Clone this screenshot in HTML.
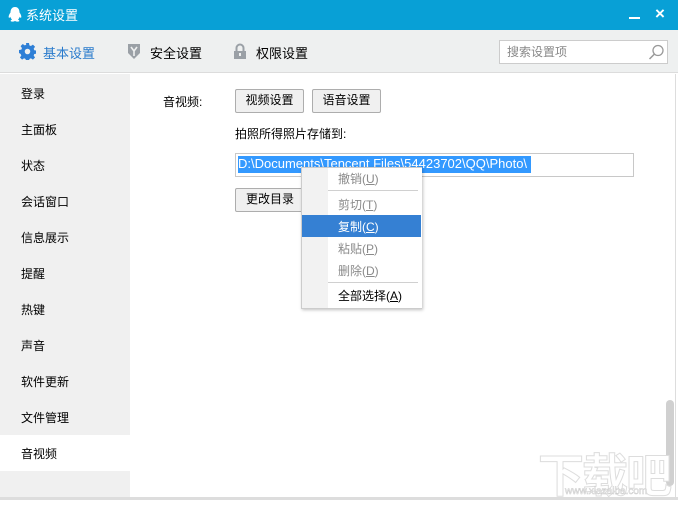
<!DOCTYPE html><html><head><style>
*{margin:0;padding:0;box-sizing:border-box}
body{width:678px;height:500px;overflow:hidden;background:#fff;font-family:"Liberation Sans","Noto Sans CJK SC",sans-serif;font-size:12px;color:#000;position:relative}
.a{position:absolute}
.btn{position:absolute;border:1px solid #adadad;border-radius:2px;background:#f0f0f0;font-size:12px;text-align:center;line-height:20px}
.side div{position:absolute;left:21px;font-size:12px}
.mi{position:absolute;left:36px;font-size:12px;color:#8a8a8a}
</style></head><body>
<div class="a" style="left:0;top:0;width:678px;height:30px;background:#08a0d6"></div>
<svg class="a" style="left:6px;top:6px" width="18" height="18" viewBox="0 0 18 18"><path d="M9 1C5.5 1 4.5 4 4.5 6.5 3 8.5 2.2 10.5 3 12c.5-.3 1-.8 1.3-1.3.3 1.3 1 2.2 1.8 2.8-1 .4-1.8 1-1.3 1.8 1 .6 3 .3 4.2-.3 1.2.6 3.2.9 4.2.3.5-.8-.3-1.4-1.3-1.8.8-.6 1.5-1.5 1.8-2.8.3.5.8 1 1.3 1.3.8-1.5 0-3.5-1.5-5.5C13.5 4 12.5 1 9 1z" fill="#fff"/></svg>
<div class="a" style="left:26px;top:5px;color:#fff;font-size:13px">系统设置</div>
<div class="a" style="left:629px;top:17px;width:11px;height:2px;background:#fff"></div>
<div class="a" style="left:655px;top:4px;color:#fff;font-size:17px;font-weight:bold">×</div>
<div class="a" style="left:0;top:30px;width:678px;height:43px;background:#eef0f0;border-bottom:1px solid #dcdcdc"></div>
<svg class="a" style="left:19px;top:43px" width="17" height="17" viewBox="0 0 16 16"><path d="M6.6 0h2.8l.4 2.2 1.4.6 1.9-1.3 2 2-1.3 1.9.6 1.4 2.2.4v2.8l-2.2.4-.6 1.4 1.3 1.9-2 2-1.9-1.3-1.4.6-.4 2.2H6.6l-.4-2.2-1.4-.6-1.9 1.3-2-2 1.3-1.9-.6-1.4L0 9.4V6.6l2.2-.4.6-1.4L1.5 2.9l2-2 1.9 1.3 1.4-.6z" fill="#2e7fd6"/><circle cx="8" cy="8" r="2.6" fill="#eef0f0"/></svg>
<div class="a" style="left:43px;top:43px;font-size:13px;color:#2a7bcc">基本设置</div>
<svg class="a" style="left:127px;top:43px" width="14" height="17" viewBox="0 0 14 17"><path d="M1 1h12v9l-6 6-6-6z" fill="#9aa0a6"/><path d="M4 4l3 4 3-4M7 8v5" stroke="#eef0f0" stroke-width="1.6" fill="none"/></svg>
<div class="a" style="left:150px;top:43px;font-size:13px">安全设置</div>
<svg class="a" style="left:233px;top:43px" width="14" height="17" viewBox="0 0 14 17"><path d="M3.5 8V5a3.5 3.5 0 0 1 7 0v3" stroke="#9aa0a6" stroke-width="2" fill="none"/><rect x="1" y="8" width="12" height="8" fill="#9aa0a6"/><rect x="6" y="10" width="2" height="3" fill="#eef0f0"/></svg>
<div class="a" style="left:256px;top:43px;font-size:13px">权限设置</div>
<div class="a" style="left:499px;top:40px;width:169px;height:24px;background:#fff;border:1px solid #ccc"></div>
<div class="a" style="left:507px;top:43px;color:#888">搜索设置项</div>
<svg class="a" style="left:648px;top:44px" width="17" height="16" viewBox="0 0 17 16"><circle cx="10" cy="6.5" r="5" stroke="#999" stroke-width="1.3" fill="none"/><path d="M6.5 10L1.5 15" stroke="#999" stroke-width="1.5"/></svg>
<div class="a side" style="left:0;top:74px;width:130px;height:423px;background:#f0f0f0">
<div style="top:11px">登录</div><div style="top:47px">主面板</div><div style="top:83px">状态</div><div style="top:119px">会话窗口</div><div style="top:155px">信息展示</div><div style="top:191px">提醒</div><div style="top:227px">热键</div><div style="top:263px">声音</div><div style="top:299px">软件更新</div><div style="top:335px">文件管理</div>
<div style="left:0;top:361px;width:130px;height:36px;background:#fff"></div>
<div style="top:371px">音视频</div></div>
<div class="a" style="left:0;top:497px;width:678px;height:3px;background:#ddd"></div>
<div class="a" style="left:675px;top:74px;width:1px;height:423px;background:#ddd"></div>
<div class="a" style="left:666px;top:400px;width:8px;height:86px;background:#d0d0d0;border-radius:4px"></div>
<div class="a" style="left:163px;top:93px">音视频:</div>
<div class="btn" style="left:235px;top:89px;width:69px;height:24px;line-height:21px">视频设置</div>
<div class="btn" style="left:312px;top:89px;width:69px;height:24px;line-height:21px">语音设置</div>
<div class="a" style="left:235px;top:125px">拍照所得照片存储到:</div>
<div class="a" style="left:235px;top:153px;width:399px;height:24px;border:1px solid #c8c8c8"></div>
<div class="a" style="left:238px;top:156px;width:293px;height:17px;background:#3399ff;color:#fff;line-height:16px;font-size:13px">D:\Documents\Tencent Files\54423702\QQ\Photo\</div>
<div class="btn" style="left:235px;top:188px;width:70px;height:24px;line-height:21px">更改目录</div>
<div class="a" style="left:301px;top:167px;width:121px;height:142px;background:#f2f2f2;border:1px solid #ccc;box-shadow:1px 1px 3px rgba(0,0,0,.25)">
<div class="a" style="left:26px;top:0;width:94px;height:140px;background:#fff"></div>
<div class="a" style="left:26px;top:22px;width:90px;height:1px;background:#d0d0d0"></div>
<div class="a" style="left:0;top:47px;width:119px;height:22px;background:#3580d3"></div>
<div class="a" style="left:26px;top:114px;width:90px;height:1px;background:#d0d0d0"></div>
<div class="mi" style="top:2px">撤销(<u>U</u>)</div>
<div class="mi" style="top:28px">剪切(<u>T</u>)</div>
<div class="mi" style="top:50px;color:#fff">复制(<u>C</u>)</div>
<div class="mi" style="top:72px">粘贴(<u>P</u>)</div>
<div class="mi" style="top:94px">删除(<u>D</u>)</div>
<div class="mi" style="top:119px;color:#000">全部选择(<u>A</u>)</div>
</div>
<div class="a" style="left:538px;top:440px;font-size:46px;color:#fff;-webkit-text-stroke:1px #ddd;font-weight:bold;letter-spacing:-2px">下载吧</div>
<div class="a" style="left:565px;top:486px;font-size:10px;color:#fff;-webkit-text-stroke:.5px #ccc">www.xiazaiba.com</div>
</body></html>
